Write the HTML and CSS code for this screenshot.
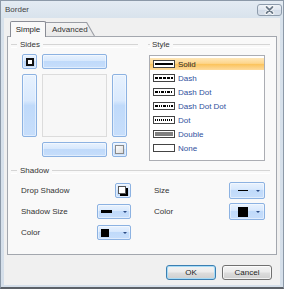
FILE: index.html
```html
<!DOCTYPE html>
<html>
<head>
<meta charset="utf-8">
<link rel="stylesheet" href="styles.css">
</head>
<body>
<div class="window">
  <div class="titlebar">
    <span class="title">Border</span>
    <div class="close">
      <svg width="23" height="10" viewBox="0 0 23 10">
        <path d="M8.5 2 L14.5 8 M14.5 2 L8.5 8" stroke="#ffffff" stroke-width="3.6" stroke-linecap="round"/>
        <path d="M8.5 2 L14.5 8 M14.5 2 L8.5 8" stroke="#6f7d8c" stroke-width="1.8" stroke-linecap="round"/>
      </svg>
    </div>
  </div>
  <div class="client">
    <div class="tabs">
      <div class="tab active">Simple</div>
      <div class="tab adv"><span>Advanced</span></div>
    </div>
    <div class="panel">
      <div class="top">
        <div class="group sides">
          <div class="ghead"><span>Sides</span></div>
          <div class="sides-grid">
            <div class="btn"><span class="ico-box"></span></div>
            <div class="btn"></div>
            <div></div>
            <div class="btn"></div>
            <div class="preview"></div>
            <div class="btn"></div>
            <div></div>
            <div class="btn"></div>
            <div class="btn"><span class="ico-off"></span></div>
          </div>
        </div>
        <div class="group style">
          <div class="ghead"><span>Style</span></div>
          <ul class="list">
            <li class="item sel">
              <svg class="ico" width="22" height="8" viewBox="0 0 22 8"><rect x="0.5" y="0.5" width="21" height="7"/><line x1="2" y1="4" x2="20" y2="4" stroke-width="2"/></svg>
              <span>Solid</span>
            </li>
            <li class="item">
              <svg class="ico" width="22" height="8" viewBox="0 0 22 8"><rect x="0.5" y="0.5" width="21" height="7"/><line x1="2" y1="4" x2="20" y2="4" stroke-width="2" stroke-dasharray="3 1"/></svg>
              <span>Dash</span>
            </li>
            <li class="item">
              <svg class="ico" width="22" height="8" viewBox="0 0 22 8"><rect x="0.5" y="0.5" width="21" height="7"/><line x1="2" y1="4" x2="20" y2="4" stroke-width="2" stroke-dasharray="3 1 1 1"/></svg>
              <span>Dash Dot</span>
            </li>
            <li class="item">
              <svg class="ico" width="22" height="8" viewBox="0 0 22 8"><rect x="0.5" y="0.5" width="21" height="7"/><line x1="2" y1="4" x2="20" y2="4" stroke-width="2" stroke-dasharray="3 1 1 1 1 1"/></svg>
              <span>Dash Dot Dot</span>
            </li>
            <li class="item">
              <svg class="ico" width="22" height="8" viewBox="0 0 22 8"><rect x="0.5" y="0.5" width="21" height="7"/><line x1="2" y1="4" x2="20" y2="4" stroke-width="2" stroke-dasharray="1 1"/></svg>
              <span>Dot</span>
            </li>
            <li class="item">
              <svg class="ico" width="22" height="8" viewBox="0 0 22 8"><rect x="0.5" y="0.5" width="21" height="7"/><line x1="2" y1="3" x2="20" y2="3" stroke="#555" stroke-width="1"/><line x1="2" y1="5" x2="20" y2="5" stroke="#555" stroke-width="1"/></svg>
              <span>Double</span>
            </li>
            <li class="item">
              <svg class="ico" width="22" height="8" viewBox="0 0 22 8"><rect x="0.5" y="0.5" width="21" height="7"/></svg>
              <span>None</span>
            </li>
          </ul>
        </div>
      </div>
      <div class="group shadow">
        <div class="ghead"><span>Shadow</span></div>
        <div class="shadow-body">
          <div class="col left">
            <div class="row"><span>Drop Shadow</span><div class="btn sqbtn"><span class="ico-shadow"></span></div></div>
            <div class="row"><span>Shadow Size</span><div class="btn dd"><span class="thick"></span><span class="arrow"></span></div></div>
            <div class="row"><span>Color</span><div class="btn dd"><span class="swatch"></span><span class="arrow"></span></div></div>
          </div>
          <div class="col right">
            <div class="row"><span>Size</span><div class="btn dd lg"><span class="thin"></span><span class="arrow"></span></div></div>
            <div class="row"><span>Color</span><div class="btn dd lg"><span class="swatch"></span><span class="arrow"></span></div></div>
          </div>
        </div>
      </div>
    </div>
    <div class="actions">
      <button class="pbtn default">OK</button>
      <button class="pbtn">Cancel</button>
    </div>
  </div>
</div>
</body>
</html>
```
FILE: styles.css
```css
* { box-sizing: border-box; margin: 0; padding: 0; }
html, body { width: 284px; height: 289px; overflow: hidden; }
body {
  font-family: "Liberation Sans", Arial, sans-serif;
  font-size: 8px;
  color: #333333;
  background: #ffffff;
}
.window {
  width: 284px;
  height: 289px;
  border: 1px solid #8c99a8;
  border-bottom: 2px solid #5c6168;
  background: linear-gradient(#e4ebf3, #d8e2ec 18px, #d5dfea);
  display: flex;
  flex-direction: column;
  padding: 0 3px 2px 3px;
}
.titlebar {
  height: 17px;
  display: flex;
  justify-content: space-between;
  align-items: flex-start;
}
.title {
  padding: 4px 0 0 1px;
  line-height: 10px;
  color: #444444;
}
.close {
  margin-top: 3px;
  margin-right: -2px;
  width: 25px;
  height: 12px;
  border: 1px solid #8e9cac;
  border-radius: 3px;
  background: linear-gradient(#eef2f7, #dfe6ef 50%, #d3dce8 51%, #d9e1eb);
  display: flex;
  align-items: center;
  justify-content: center;
}
.client {
  flex: 1;
  background: #f0f0f0;
  display: flex;
  flex-direction: column;
}
.tabs {
  display: flex;
  align-items: flex-end;
  height: 19px;
  padding-left: 6px;
  margin-bottom: -1px;
  position: relative;
  z-index: 1;
}
.tab.active {
  width: 36px;
  height: 16px;
  border: 1px solid #898c95;
  border-bottom: none;
  border-radius: 2px 2px 0 0;
  background: #f9f9f9;
  display: flex;
  align-items: center;
  justify-content: center;
  padding-bottom: 1px;
  position: relative;
  z-index: 2;
  color: #222222;
}
.tab.adv {
  width: 50px;
  height: 14px;
  margin: 0 0 1px -1px;
  position: relative;
  padding-left: 7px;
  display: flex;
  align-items: center;
  color: #333333;
}
.tab.adv::before {
  content: '';
  position: absolute;
  inset: 0;
  background: #9a9da5;
  clip-path: polygon(0 0, 42px 0, 50px 100%, 0 100%);
}
.tab.adv::after {
  content: '';
  position: absolute;
  inset: 1px 1px 0 1px;
  background: linear-gradient(#f3f3f3, #e9e9e9);
  clip-path: polygon(0 0, 40.3px 0, 47.8px 100%, 0 100%);
}
.tab.adv span { position: relative; z-index: 1; }
.panel {
  margin: 0 3px;
  height: 219px;
  border: 1px solid #a3a7ae;
  background: #f9f9f9;
  padding: 3px 6px 0 3px;
}
.top { display: flex; gap: 10px; }
.sides { width: 127px; }
.style { width: 122px; }
.ghead {
  display: flex;
  align-items: center;
  height: 10px;
}
.ghead::before, .ghead::after {
  content: '';
  height: 2px;
  margin-top: 2px;
  border-top: 1px solid #d5d5d5;
  border-bottom: 1px solid #ffffff;
}
.ghead::before { width: 6px; }
.ghead::after { flex: 1; }
.ghead span { padding: 0 3px; line-height: 10px; color: #333333; }
.style .ghead::before { width: 2px; }
.style .ghead span { padding-left: 2px; }

.sides-grid {
  margin: 4px 0 0 11px;
  display: grid;
  grid-template-columns: 15px 65px 15px;
  grid-template-rows: 15px 63px 15px;
  gap: 5px;
}
.btn {
  border: 1px solid #8cb2e2;
  border-radius: 2px;
  background: linear-gradient(#e8f2fe, #d9e9fd 42%, #c0dafa 50%, #c7defb);
  box-shadow: inset 0 0 0 1px rgba(255, 255, 255, 0.45);
  display: flex;
  align-items: center;
  justify-content: center;
}
.preview {
  border: 1px solid #dcdcdc;
  background: #f7f7f7;
}
.ico-box {
  width: 8px;
  height: 8px;
  border: 2px solid #111111;
  background: #ffffff;
}
.ico-off {
  width: 9px;
  height: 9px;
  border: 1px solid #8a8a8a;
  background: linear-gradient(135deg, #ffffff, #dcdcdc);
}
.ico-shadow {
  width: 8px;
  height: 8px;
  border: 1px solid #555555;
  background: #ffffff;
  box-shadow: 2px 2px 0 #000000;
  margin: -1px 1px 0 -1px;
}
.list {
  margin: 5px 0 0 1px;
  width: 116px;
  height: 106px;
  border: 1px solid #abadb3;
  background: #ffffff;
  list-style: none;
  padding-top: 1px;
}
.item {
  height: 14px;
  display: flex;
  align-items: center;
  gap: 3px;
  padding-left: 3px;
  color: #2f4f9d;
}
.item.sel {
  background: linear-gradient(#fee7ba, #fdd68c 45%, #fbc35c 52%, #fddb9e) 0 1px / 100% 12px no-repeat;
  color: #2a2a2a;
}
.ico rect { fill: #ffffff; stroke: #444444; stroke-width: 1; }
.ico line { stroke: #000000; }

.shadow { margin-top: 5px; }
.shadow-body {
  display: flex;
  gap: 23px;
  margin-top: 4px;
  padding-left: 10px;
}
.col { display: flex; flex-direction: column; }
.col.left { width: 110px; }
.col.right { width: 111px; }
.row {
  height: 21px;
  display: flex;
  align-items: center;
  justify-content: space-between;
  color: #333333;
}
.sqbtn { width: 16px; height: 15px; }
.dd {
  width: 34px;
  height: 15px;
  padding: 0 3px 0 3px;
  justify-content: flex-start;
}
.dd.lg {
  width: 36px;
  height: 17px;
  padding: 0 4px 0 8px;
}
.arrow {
  margin-left: auto;
  width: 0;
  height: 0;
  border-left: 2px solid transparent;
  border-right: 2px solid transparent;
  border-top: 2px solid #2b4b84;
}
.thick { width: 11px; height: 3px; background: #000000; }
.thin { width: 10px; height: 1px; background: #000000; }
.swatch { width: 8px; height: 8px; background: #000000; }
.lg .swatch { width: 10px; height: 10px; }

.actions {
  display: flex;
  justify-content: flex-end;
  gap: 6px;
  margin-top: 10px;
  padding-right: 8px;
}
.pbtn {
  width: 50px;
  height: 15px;
  font: inherit;
  color: #1e1e1e;
  border: 1px solid #707070;
  border-radius: 3px;
  background: linear-gradient(#f3f3f3, #ebebeb 48%, #dddddd 52%, #cfcfcf);
  box-shadow: inset 0 0 0 1px rgba(255, 255, 255, 0.7);
}
.pbtn.default {
  border-color: #3c7fb1;
  box-shadow: inset 0 0 0 1px #a6dbf7;
}
```
